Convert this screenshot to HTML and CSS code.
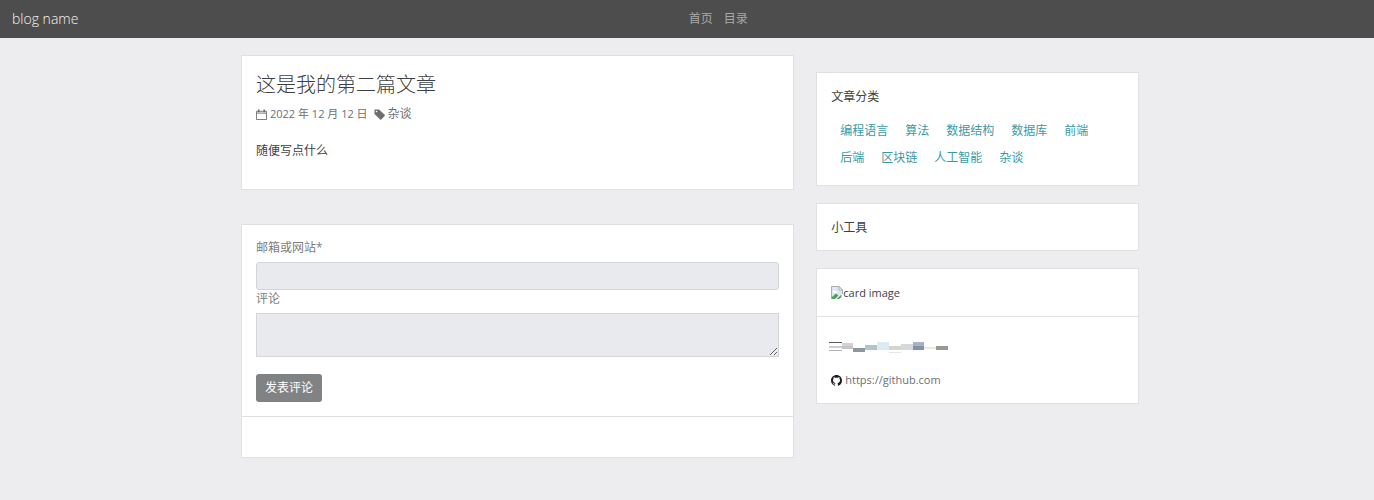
FILE: index.html
```html
<!DOCTYPE html>
<html lang="zh">
<head>
    <meta charset="UTF-8">
    <meta name="viewport" content="width=device-width, initial-scale=1.0">
    <title>blog name</title>
    <link rel="stylesheet" href="styles.css">
</head>
<body>
    <nav class="navbar">
        <a class="navbar-brand" href="#">blog name</a>
        <ul class="navbar-nav">
            <li><a href="#">首页</a></li>
            <li><a href="#">目录</a></li>
        </ul>
    </nav>

    <div class="container">
        <main class="content">
            <article class="card article">
                <h1>这是我的第二篇文章</h1>
                <div class="meta">
                    <svg class="icon" viewBox="0 0 12 12" fill="none" stroke="currentColor">
                        <path d="M.5 2.5h11v9H.5zM.5 4.5h11"/>
                        <path d="M3 .5v3M9 .5v3" stroke-width="1.8"/>
                    </svg>
                    <span class="latin">2022 年 12 月 12 日</span>
                    <svg class="icon tag" viewBox="0 0 12 12" fill="currentColor">
                        <path fill-rule="evenodd" d="M.5.5h5L11.6 6.4a.9.9 0 0 1 0 1.2L7.9 11.5a.9.9 0 0 1-1.2 0L.5 5.5zM2.8 1.8a.9.9 0 1 0 0 1.8.9.9 0 0 0 0-1.8z"/>
                    </svg>
                    <span>杂谈</span>
                </div>
                <p>随便写点什么</p>
            </article>

            <section class="card comments">
                <form class="comment-form">
                    <label for="contact">邮箱或网站*</label>
                    <input type="text" id="contact" required>
                    <label for="comment">评论</label>
                    <textarea id="comment"></textarea>
                    <button type="submit">发表评论</button>
                </form>
                <div class="comment-list"></div>
            </section>
        </main>

        <aside class="sidebar">
            <section class="card widget">
                <h2>文章分类</h2>
                <div class="categories">
                    <a href="#">编程语言</a>
                    <a href="#">算法</a>
                    <a href="#">数据结构</a>
                    <a href="#">数据库</a>
                    <a href="#">前端</a>
                    <a href="#">后端</a>
                    <a href="#">区块链</a>
                    <a href="#">人工智能</a>
                    <a href="#">杂谈</a>
                </div>
            </section>

            <section class="card widget">
                <h2>小工具</h2>
            </section>

            <section class="card profile">
                <div class="profile-image">
                    <svg class="picture" viewBox="0 0 12 14">
                        <path d="M.5 13V.5h7.5l3.5 3.5v4" fill="#dce6f5" stroke="#a9adb3"/>
                        <path d="M8 .5V4h3.5z" fill="#fff" stroke="#a9adb3"/>
                        <path d="M2 7a1.6 1.6 0 0 1 2.2-2.2A1.6 1.6 0 0 1 6 7z" fill="#fff"/>
                        <path d="M1 13V11l4-3.5 2.5 2.2L4 13z" fill="#4fa056"/>
                        <path d="M5.5 13l5-4.5v2.5L8 13z" fill="#4fa056"/>
                    </svg>
                    <span class="latin">card image</span>
                </div>
                <div class="profile-body">
                    <svg class="mosaic" viewBox="0 0 119 12" shape-rendering="crispEdges">
                        <path d="M0 1h13v1H0z" fill="#555b61"/>
                        <path d="M0 5h13v2H0z" fill="#cccecf"/>
                        <path d="M0 9h13v1H0z" fill="#b2b4b5"/>
                        <path d="M13 2h11v6H13z" fill="#d5d1d4"/>
                        <path d="M13 5h11v3H13z" fill="#c6c5c8"/>
                        <path d="M24 7h12v4H24z" fill="#8c979f"/>
                        <path d="M36 4h12v5H36z" fill="#b3c2cb"/>
                        <path d="M48 1h12v8H48z" fill="#dcebf1"/>
                        <path d="M60 5h12v4H60z" fill="#d5d5d0"/>
                        <path d="M60 11h12v1H60z" fill="#e8e9dd"/>
                        <path d="M72 3h12v6H72z" fill="#d5d8df"/>
                        <path d="M84 1h11v4H84z" fill="#a6b2c6"/>
                        <path d="M84 5h11v4H84z" fill="#8391aa"/>
                        <path d="M95 6h12v2H95z" fill="#e6e8e1"/>
                        <path d="M107 5h12v4h-12z" fill="#989993"/>
                    </svg>
                    <a class="github" href="https://github.com">
                        <svg class="icon" viewBox="0 0 16 16" fill="#1b1f23">
                            <path d="M8 0C3.58 0 0 3.58 0 8c0 3.54 2.29 6.53 5.47 7.59.4.07.55-.17.55-.38 0-.19-.01-.82-.01-1.49-2.01.37-2.53-.49-2.69-.94-.09-.23-.48-.94-.82-1.13-.28-.15-.68-.52-.01-.53.63-.01 1.08.58 1.23.82.72 1.21 1.87.87 2.33.66.07-.52.28-.87.51-1.07-1.78-.2-3.64-.89-3.64-3.95 0-.87.31-1.59.82-2.15-.08-.2-.36-1.02.08-2.12 0 0 .67-.21 2.2.82.64-.18 1.32-.27 2-.27s1.36.09 2 .27c1.53-1.04 2.2-.82 2.2-.82.44 1.1.16 1.92.08 2.12.51.56.82 1.27.82 2.15 0 3.07-1.87 3.75-3.65 3.95.29.25.54.73.54 1.48 0 1.07-.01 1.93-.01 2.2 0 .21.15.46.55.38A8.01 8.01 0 0 0 16 8c0-4.42-3.58-8-8-8z"/>
                        </svg>
                        <span class="latin">https://github.com</span>
                    </a>
                </div>
            </section>
        </aside>
    </div>
</body>
</html>
```
FILE: styles.css
```css
* {
    box-sizing: border-box;
}

body {
    margin: 0;
    background-color: #ededef;
    color: #3e4144;
    font-family: "Open Sans", "Noto Sans CJK SC", sans-serif;
    font-size: 12px;
    line-height: 18px;
}

a {
    text-decoration: none;
}

.navbar {
    display: flex;
    align-items: center;
    height: 38px;
    padding: 0 16px 0 12px;
    background-color: #4d4d4d;
}

.navbar-brand {
    color: #f4f4f4;
    font-size: 14px;
    font-weight: 300;
}

.navbar-nav {
    display: flex;
    flex: 1;
    justify-content: center;
    gap: 11px;
    margin: 0;
    padding: 0;
    list-style: none;
}

.navbar-nav a {
    color: #a9a9a9;
}

.container {
    display: flex;
    align-items: flex-start;
    gap: 22px;
    max-width: 904px;
    margin: 0 auto;
    padding: 17px 0 42px 6px;
}

.content {
    flex: 12;
    display: flex;
    flex-direction: column;
    gap: 34px;
    min-width: 0;
}

.sidebar {
    flex: 7;
    display: flex;
    flex-direction: column;
    gap: 17px;
    min-width: 0;
    padding-top: 17px;
}

.card {
    background-color: #fff;
    border: 1px solid #e0e0e2;
}

.article {
    padding: 15px 14px 29px;
}

.article h1 {
    margin: 0;
    font-size: 20px;
    font-weight: 300;
    line-height: 28px;
}

.meta {
    display: flex;
    align-items: center;
    gap: 3px;
    margin-top: 6px;
    color: #6c7073;
}

.latin {
    font-size: 11px;
}

.icon {
    width: 11px;
    height: 11px;
}

.tag {
    margin-left: 3px;
}

.article p {
    margin: 19px 0 0;
}

.comment-form {
    display: flex;
    flex-direction: column;
    align-items: flex-start;
    padding: 14px;
    color: #7b7e81;
}

.comment-form input,
.comment-form textarea {
    width: 100%;
    margin-top: 5px;
    padding: 4px 8px;
    border: 1px solid #d3d5d8;
    background-color: #e9eaed;
    font: inherit;
}

.comment-form input {
    height: 28px;
    border-radius: 3px;
}

.comment-form textarea {
    height: 44px;
}

.comment-form button {
    height: 28px;
    margin-top: 17px;
    padding: 0 9px;
    border: 0;
    border-radius: 3px;
    background-color: #818283;
    color: #fff;
    font: inherit;
}

.comment-list {
    min-height: 41px;
    border-top: 1px solid #e0e0e2;
}

.widget {
    padding: 15px 14px 13px;
}

.widget h2 {
    margin: 0;
    font-size: 12px;
    font-weight: 400;
}

.categories {
    display: flex;
    flex-wrap: wrap;
    gap: 9px 17px;
    padding: 16px 9px 5px;
}

.categories a {
    color: #3b9aa5;
}

.profile-image {
    display: flex;
    align-items: center;
    padding: 15px 14px 14px;
    border-bottom: 1px solid #e0e0e2;
}

.picture {
    width: 12px;
    height: 14px;
}

.profile-body {
    display: flex;
    flex-direction: column;
    gap: 18px;
    padding: 24px 12px 14px;
}

.mosaic {
    width: 119px;
    height: 12px;
}

.github {
    display: flex;
    align-items: center;
    gap: 3px;
    padding-left: 2px;
    color: #6c7073;
}
```
